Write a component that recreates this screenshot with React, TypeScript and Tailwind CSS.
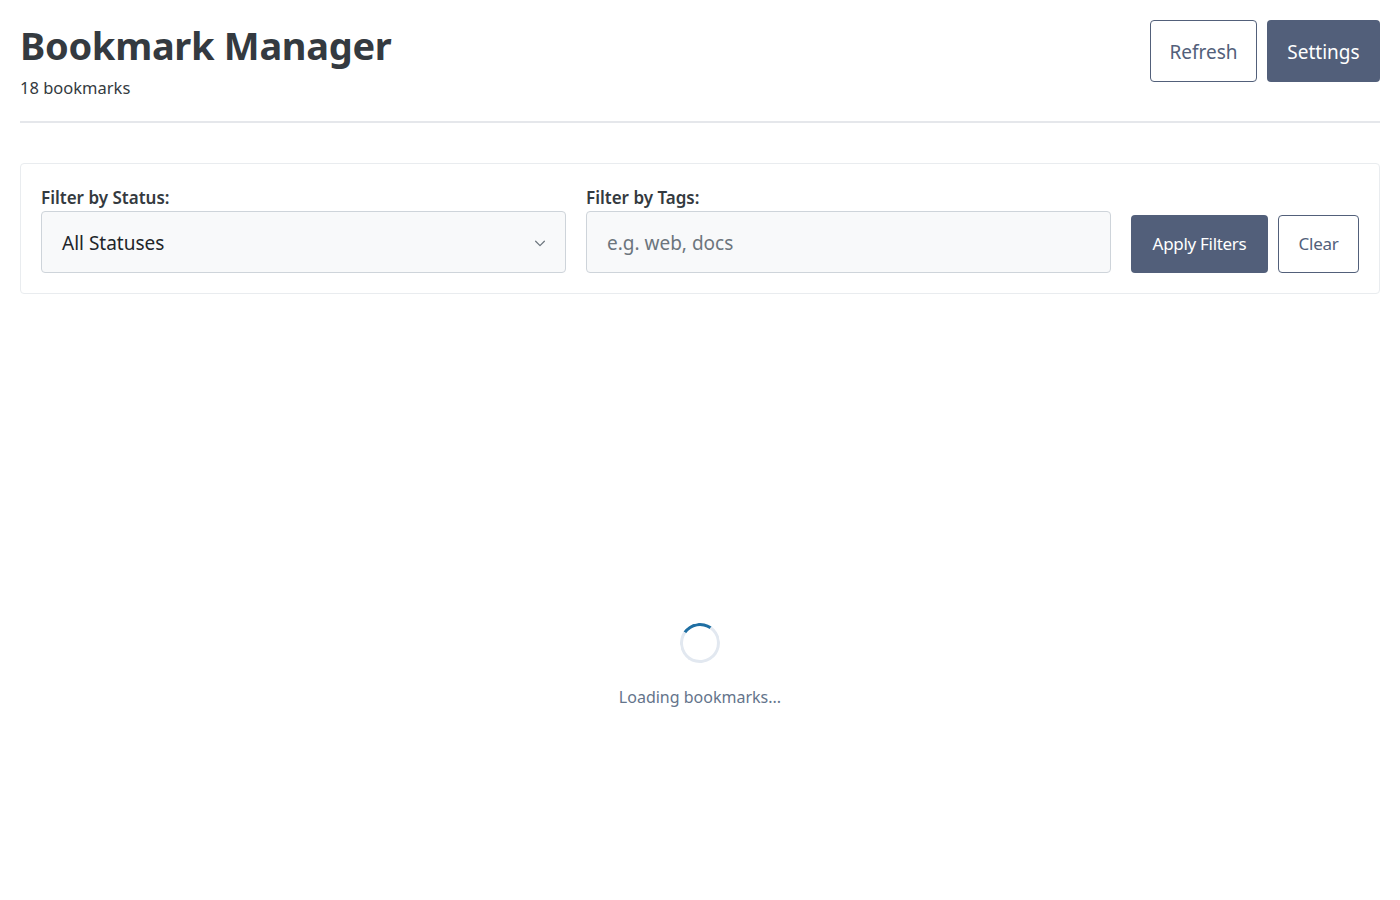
import React from "react";

export default function App() {
  return (
    <div className="min-h-[900px] bg-white px-5 pt-5 text-[#343a40]" style={{ fontFamily: '"Noto Sans", "Open Sans", sans-serif' }}>
      <header className="flex items-start justify-between border-b-2 border-[#e5e7eb] pb-[22px]">
        <div>
          <h1 className="mt-[1px] text-[38px] font-bold leading-[48px] tracking-[-0.3px] text-[#343a40]">Bookmark Manager</h1>
          <p className="mt-[8px] text-[16.5px] leading-[22px] text-[#343a40]">18 bookmarks</p>
        </div>
        <div className="flex gap-[10px]">
          <button className="h-[62px] w-[107px] rounded-[4px] border border-[#52607a] bg-white pt-[2px] text-[19px] text-[#52607a]">Refresh</button>
          <button className="h-[62px] w-[113px] rounded-[4px] bg-[#525f7a] pt-[2px] text-[19px] text-white">Settings</button>
        </div>
      </header>

      <section className="mt-[40px] flex items-end gap-5 rounded-[4px] border border-[#e9ecef] px-5 pb-5 pt-[20px]">
        <div className="flex flex-1 flex-col">
          <label className="pt-[1px] text-[17px] font-semibold leading-[26px] text-[#343a40]">Filter by Status:</label>
          <div className="flex h-[62px] items-center justify-between rounded-[4px] border border-[#ced4da] bg-[#f8f9fa] pl-5 pr-[18px] pt-[2px]">
            <span className="text-[19px] text-[#212529]">All Statuses</span>
            <svg width="14" height="14" viewBox="0 0 16 16" fill="none" stroke="#6c757d" strokeWidth="1.4" strokeLinecap="round" strokeLinejoin="round">
              <path d="M3 6l5 5 5-5" />
            </svg>
          </div>
        </div>
        <div className="flex flex-1 flex-col">
          <label className="pt-[1px] text-[17px] font-semibold leading-[26px] text-[#343a40]">Filter by Tags:</label>
          <input
            placeholder="e.g. web, docs"
            className="h-[62px] rounded-[4px] border border-[#ced4da] bg-[#f8f9fa] px-5 pt-[2px] text-[19px] text-[#212529] outline-none placeholder:text-[#6c757d]"
          />
        </div>
        <div className="flex gap-[10px]">
          <button className="h-[58px] w-[137px] rounded-[4px] bg-[#525f7a] text-[17px] tracking-[-0.3px] text-white">Apply Filters</button>
          <button className="h-[58px] w-[81px] rounded-[4px] border border-[#52607a] bg-white text-[17px] tracking-[-0.3px] text-[#52607a]">Clear</button>
        </div>
      </section>

      <div className="flex flex-col items-center pt-[329px]">
        <div className="h-10 w-10 rounded-full border-[3px] border-[#e2e8f0] border-t-[#1f6fa3]" style={{ transform: "rotate(-10deg)" }} />
        <p className="mt-[22px] text-[16px] text-[#64748b]">Loading bookmarks...</p>
      </div>
    </div>
  );
}
